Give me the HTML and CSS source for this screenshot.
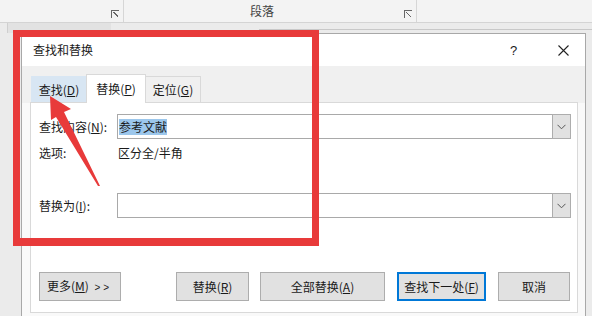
FILE: index.html
```html
<!DOCTYPE html>
<html lang="zh-CN">
<head>
    <meta charset="UTF-8">
    <title>查找和替换</title>
    <link rel="stylesheet" href="styles.css">
</head>
<body>
    <div class="ribbon">
        <div class="group g1"><span class="launcher"></span></div>
        <div class="group g2"><span class="caption">段落</span><span class="launcher"></span></div>
        <div class="group g3"></div>
    </div>
    <div class="below">
        <div class="strip-left"></div>
        <div class="strip-right"></div>
    </div>

    <div class="dialog">
        <div class="titlebar">
            <span class="title">查找和替换</span>
            <span class="help">?</span>
            <span class="close">
                <svg width="11" height="11" viewBox="0 0 11 11"><path d="M0.5 0.5 L10.5 10.5 M10.5 0.5 L0.5 10.5" stroke="#222" stroke-width="1.1" fill="none"/></svg>
            </span>
        </div>
        <div class="tabs">
            <div class="tab hover">查找(<u>D</u>)</div>
            <div class="tab active">替换(<u>P</u>)</div>
            <div class="tab">定位(<u>G</u>)</div>
        </div>
        <div class="panel">
            <div class="row first">
                <span class="label">查找内容(<u>N</u>):</span>
                <div class="combo">
                    <span class="value"><span class="sel">参考文献</span></span>
                    <span class="drop"><svg width="9" height="6" viewBox="0 0 9 6"><path d="M0.5 0.8 L4.5 4.8 L8.5 0.8" stroke="#555" stroke-width="1" fill="none"/></svg></span>
                </div>
            </div>
            <div class="row opts">
                <span class="label">选项:</span>
                <span class="optval">区分全/半角</span>
            </div>
            <div class="row third">
                <span class="label">替换为(<u>I</u>):</span>
                <div class="combo">
                    <span class="value"></span>
                    <span class="drop"><svg width="9" height="6" viewBox="0 0 9 6"><path d="M0.5 0.8 L4.5 4.8 L8.5 0.8" stroke="#555" stroke-width="1" fill="none"/></svg></span>
                </div>
            </div>
            <div class="buttons">
                <button class="btn more">更多(<u>M</u>) <span class="chev">&gt; &gt;</span></button>
                <button class="btn replace">替换(<u>R</u>)</button>
                <button class="btn all">全部替换(<u>A</u>)</button>
                <button class="btn next">查找下一处(<u>F</u>)</button>
                <button class="btn cancel">取消</button>
            </div>
        </div>
    </div>

    <div class="highlight"></div>
    <svg class="arrow" width="592" height="316" viewBox="0 0 592 316">
        <polygon points="50,96 71,109 64,112 100,186 98,186 56,117 51,120" fill="#e83a3a"/>
    </svg>
</body>
</html>
```

FILE: styles.css
```css
body {
    margin: 0;
    width: 592px;
    height: 316px;
    overflow: hidden;
    position: relative;
    background: #ebebeb;
    font-family: "Noto Sans CJK SC", "Liberation Sans", sans-serif;
    font-size: 12px;
    color: #1a1a1a;
}
u {
    text-decoration: underline;
    text-underline-offset: 1px;
}

/* word ribbon behind the dialog */
.ribbon {
    height: 23px;
    display: flex;
    background: #f3f3f3;
    border-bottom: 1px solid #d4d4d4;
    box-sizing: border-box;
}
.group {
    position: relative;
    border-right: 1px solid #d6d6d6;
}
.g1 {
    width: 123px;
}
.g2 {
    width: 292px;
}
.g3 {
    flex: 1;
    border-right: none;
}
.caption {
    position: absolute;
    left: 126px;
    top: 3px;
    color: #444;
    line-height: 16px;
}
.launcher {
    position: absolute;
    right: 4px;
    top: 10px;
    width: 7px;
    height: 7px;
    border-left: 1px solid #666;
    border-top: 1px solid #666;
}
.launcher::after {
    content: "";
    position: absolute;
    left: 1px;
    top: 1px;
    width: 5px;
    height: 5px;
    background: linear-gradient(45deg, transparent 45%, #666 45%, #666 60%, transparent 60%);
}
.below {
    display: flex;
    height: 10px;
}
.strip-left {
    width: 103px;
    background: #e2e2e2;
    border-left: 1px solid #cfcfcf;
    margin-left: 7px;
}
.strip-right {
    flex: 1;
    margin-left: 148px;
    border-bottom: 1px solid #c8c8c8;
    height: 6px;
}

/* the dialog window */
.dialog {
    position: absolute;
    left: 21px;
    top: 33px;
    width: 565px;
    height: 283px;
    background: #f9f9f9;
    border: 1px solid #a8a8a8;
    border-bottom: none;
    box-sizing: border-box;
}
.titlebar {
    height: 32px;
    background: #fff;
    display: flex;
    align-items: center;
    padding-left: 11px;
}
.title {
    flex: 1;
    line-height: 16px;
}
.help {
    width: 12px;
    margin-right: 36px;
    font-family: "Liberation Sans", sans-serif;
    font-size: 13px;
}
.close {
    width: 11px;
    height: 11px;
    margin-right: 16px;
    display: flex;
}
.tabs {
    height: 37px;
    background: #f0f0f0;
    display: flex;
    align-items: flex-end;
    padding-left: 9px;
    box-sizing: border-box;
}
.tab {
    height: 26px;
    width: 55px;
    box-sizing: border-box;
    border: 1px solid #d9d9d9;
    border-bottom: none;
    display: flex;
    align-items: center;
    justify-content: center;
    line-height: 16px;
    margin-bottom: 1px;
}
.tab.hover {
    background: #d8e6f3;
    border-color: #d8e6f3;
    border-right: none;
}
.tab.active {
    background: #fff;
    height: 29px;
    width: 60px;
    margin-bottom: 0;
    position: relative;
    z-index: 1;
}
.tab + .tab:not(.active) {
    border-left: none;
}
.panel {
    margin: -1px 7px 0 8px;
    height: 211px;
    background: #fff;
    border: 1px solid #d9d9d9;
    box-sizing: border-box;
    padding: 11px 6px 0 8px;
}
.row {
    display: flex;
    align-items: center;
    height: 25px;
    line-height: 16px;
}
.label {
    width: 78px;
}
.combo {
    flex: 1;
    height: 25px;
    display: flex;
    border: 1px solid #a9a9a9;
    box-sizing: border-box;
}
.value {
    flex: 1;
    display: flex;
    align-items: center;
    padding-left: 1px;
}
.sel {
    background: #9cc7ec;
    line-height: 16px;
}
.drop {
    width: 17px;
    background: #e1e1e1;
    border: 1px solid #adadad;
    margin: -1px -1px -1px 0;
    display: flex;
    align-items: center;
    justify-content: center;
}
.opts {
    height: 16px;
    margin-top: 6px;
}
.optval {
    padding-left: 1px;
}
.third {
    margin-top: 32px;
}
.buttons {
    display: flex;
    margin-top: 54px;
}
.btn {
    height: 29px;
    background: #e1e1e1;
    border: 1px solid #adadad;
    font-family: inherit;
    font-size: 12px;
    color: #1a1a1a;
    padding: 0;
    line-height: 16px;
}
.more {
    width: 82px;
    text-align: left;
    padding-left: 7px;
}
.chev {
    font-family: "Liberation Sans", sans-serif;
    font-size: 10px;
    margin-left: 3px;
}
.replace {
    width: 73px;
    margin-left: 55px;
}
.all {
    width: 125px;
    margin-left: 11px;
}
.next {
    width: 89px;
    margin-left: 12px;
    border: 2px solid #0078d7;
}
.cancel {
    width: 72px;
    margin-left: 12px;
}

/* annotation on top */
.highlight {
    position: absolute;
    left: 13px;
    top: 30px;
    width: 306px;
    height: 216px;
    box-sizing: border-box;
    border: 7px solid #e83a3a;
    border-bottom-width: 8px;
}
.arrow {
    position: absolute;
    left: 0;
    top: 0;
}
```
